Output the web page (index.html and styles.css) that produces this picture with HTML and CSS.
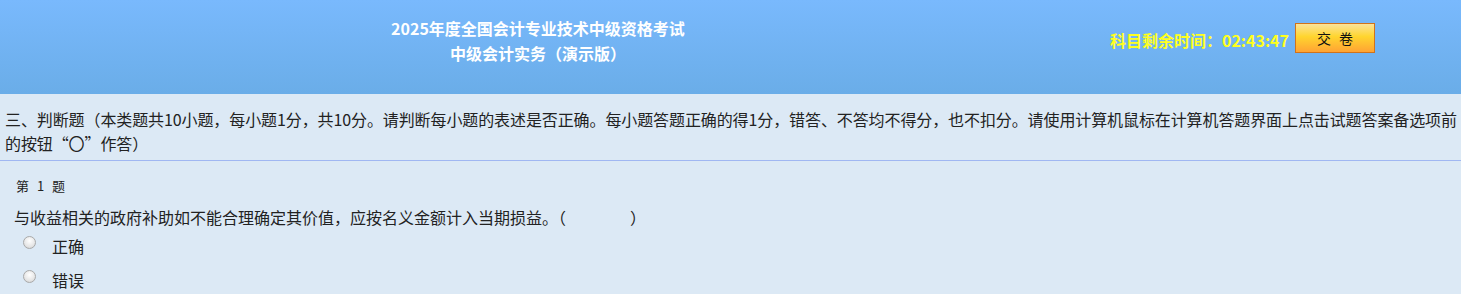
FILE: index.html
```html
<!DOCTYPE html>
<html lang="zh-CN">
<head>
    <meta charset="UTF-8">
    <title>中级会计实务（演示版）</title>
    <link rel="stylesheet" href="styles.css">
</head>
<body>
    <div class="header">
        <div class="exam-title">
            <div class="title-main">2025年度全国会计专业技术中级资格考试</div>
            <div class="title-sub">中级会计实务（演示版）</div>
        </div>
        <div class="timer-box">
            <span class="timer">科目剩余时间：02:43:47</span>
            <button class="submit-btn">交 卷</button>
        </div>
    </div>

    <div class="section-desc">
        三、判断题（本类题共10小题，每小题1分，共10分。请判断每小题的表述是否正确。每小题答题正确的得1分，错答、不答均不得分，也不扣分。请使用计算机鼠标在计算机答题界面上点击试题答案备选项前<br>的按钮“〇”作答）
    </div>

    <div class="question">
        <div class="question-num">第 1 题</div>
        <div class="question-text">与收益相关的政府补助如不能合理确定其价值，应按名义金额计入当期损益。（<span class="blank"></span>）</div>
        <label class="option">
            <input type="radio" name="q1" class="option-radio">
            <span class="option-label">正确</span>
        </label>
        <label class="option">
            <input type="radio" name="q1" class="option-radio">
            <span class="option-label">错误</span>
        </label>
    </div>
</body>
</html>
```

FILE: styles.css
```css
html, body {
    overflow: hidden;
}

body {
    margin: 0;
    font-family: "Noto Sans CJK SC", "Noto Sans", sans-serif;
    background-color: #dce9f5;
    color: #222;
}

.header {
    height: 94px;
    display: flex;
    align-items: flex-start;
    background: linear-gradient(to bottom, #79b9fd, #6aade8);
}

.exam-title {
    width: 1076px;
    padding-top: 16px;
    text-align: center;
    color: #fff;
    font-size: 16px;
    font-weight: bold;
    line-height: 25px;
}

.timer-box {
    display: flex;
    align-items: center;
    gap: 6px;
    margin-left: auto;
    padding: 23px 86px 0 0;
}

.timer {
    color: #ffff1e;
    font-size: 16px;
    font-weight: bold;
    margin-top: 3px;
}

.submit-btn {
    width: 80px;
    height: 30px;
    border: 1px solid #d1731b;
    background: linear-gradient(to bottom, #fbe39a 0%, #ffd52e 45%, #ffa334 100%);
    font-family: "Noto Sans CJK SC", sans-serif;
    font-size: 14px;
    word-spacing: 5px;
    color: #111;
    padding: 0;
    cursor: pointer;
}

.section-desc {
    padding: 13px 0 5px 5px;
    font-size: 16px;
    line-height: 24px;
    letter-spacing: -0.1px;
    white-space: nowrap;
    border-bottom: 1px solid #a0b7f2;
}

.question {
    padding: 15px 0 0 14px;
}

.question-num {
    font-size: 13px;
    line-height: 20px;
    word-spacing: 5px;
    padding-left: 2px;
    margin-bottom: 9px;
}

.question-text {
    font-size: 16px;
    line-height: 24px;
}

.blank {
    display: inline-block;
    width: 64px;
}

.option {
    display: flex;
    align-items: center;
    height: 34px;
    padding-left: 9px;
}

.option-radio {
    appearance: none;
    width: 13px;
    height: 13px;
    margin: 0 16px 7px 0;
    border: 1px solid #a9a9a9;
    border-radius: 50%;
    background: radial-gradient(circle at 50% 35%, #ffffff 0%, #e6e6e6 60%, #cfcfcf 100%);
}

.option-label {
    font-size: 16px;
}
```
